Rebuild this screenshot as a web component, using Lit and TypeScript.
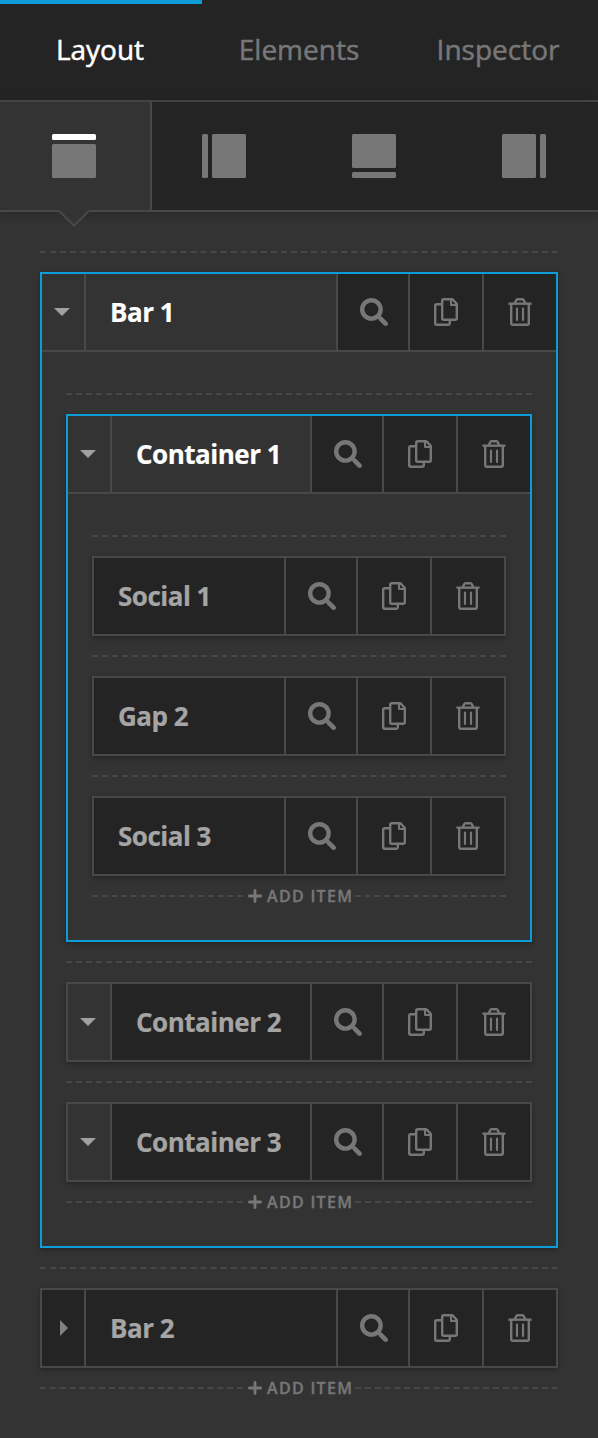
import { LitElement, html, svg, css, nothing } from "lit";
import { customElement, property } from "lit/decorators.js";

interface TreeItem {
  label: string;
  toggle?: "open" | "closed";
  active?: boolean;
  children?: TreeItem[];
}

const TREE: TreeItem[] = [
  {
    label: "Bar 1",
    toggle: "open",
    active: true,
    children: [
      {
        label: "Container 1",
        toggle: "open",
        active: true,
        children: [{ label: "Social 1" }, { label: "Gap 2" }, { label: "Social 3" }],
      },
      { label: "Container 2", toggle: "open" },
      { label: "Container 3", toggle: "open" },
    ],
  },
  { label: "Bar 2", toggle: "closed" },
];

const searchIcon = html`<svg width="28" height="28" viewBox="0 0 28 28" fill="none" stroke="currentColor">
  <circle cx="11.4" cy="11.4" r="9.2" stroke-width="4.4" />
  <path d="M18 18l3 3" stroke-width="3.2" />
  <path d="M20.8 20.8l4.800 4.800" stroke-width="4.600" stroke-linecap="round" />
</svg>`;

const copyIcon = html`<svg width="24" height="28" viewBox="0 0 24 28" fill="none" stroke="currentColor" stroke-width="2.400" stroke-linejoin="round">
  <path d="M7.500 6.200H2.700A1.500 1.500 0 0 0 1.200 7.700V25.300A1.500 1.500 0 0 0 2.700 26.800H14.300A1.500 1.500 0 0 0 15.800 25.300V22" />
  <path d="M9.700 1.200H18.200L22.800 5.800V20.300A1.500 1.500 0 0 1 21.300 21.800H9.700A1.500 1.500 0 0 1 8.200 20.300V2.700A1.500 1.500 0 0 1 9.700 1.200Z" />
  <path d="M17 1.500V7H22.500" stroke-width="2" />
</svg>`;

const trashIcon = html`<svg width="24" height="28" viewBox="0 0 24 28" fill="none" stroke="currentColor" stroke-width="2.400" stroke-linejoin="round">
  <path d="M0.500 5.700H23.500" />
  <path d="M6.600 5.500L8.300 2A1.500 1.500 0 0 1 9.700 1.200H14.300A1.500 1.500 0 0 1 15.700 2L17.400 5.500" />
  <path d="M3.200 6V25.300A1.500 1.500 0 0 0 4.700 26.800H19.300A1.500 1.500 0 0 0 20.800 25.300V6" />
  <path d="M9 10.500V22M15 10.500V22" stroke-width="2.200" stroke-linecap="round" />
</svg>`;

const plusIcon = html`<svg width="14" height="14" viewBox="0 0 14 14" fill="none" stroke="currentColor" stroke-width="2.800" stroke-linecap="round">
  <path d="M7 1.400V12.600M1.400 7H12.600" />
</svg>`;

const caret = (dir: "open" | "closed") =>
  dir === "open"
    ? html`<svg width="16" height="8" viewBox="0 0 16 8"><path d="M0 0H16L8 8Z" fill="currentColor" /></svg>`
    : html`<svg class="side" width="8" height="16" viewBox="0 0 8 16"><path d="M0 0V16L8 8Z" fill="currentColor" /></svg>`;

/* Region pictograms: [x, y, width, height] of the bar, then of the page body. */
const REGIONS = [
  { name: "top", bar: [0, 0, 44, 6], body: [0, 10, 44, 34] },
  { name: "left", bar: [0, 0, 6, 44], body: [10, 0, 34, 44] },
  { name: "bottom", bar: [0, 38, 44, 6], body: [0, 0, 44, 34] },
  { name: "right", bar: [38, 0, 6, 44], body: [0, 0, 34, 44] },
];

const block = ([x, y, w, h]: number[], cls: string) =>
  svg`<rect class=${cls} x=${x} y=${y} width=${w} height=${h} rx="1.500" />`;

@customElement("item-tree")
class ItemTree extends LitElement {
  @property({ attribute: false }) items: TreeItem[] = [];

  static styles = css`
    :host {
      display: block;
    }
    .drop {
      display: flex;
      align-items: center;
      height: 40px;
      color: #777;
    }
    .dash {
      flex: 1;
      border-top: 2px dashed #484848;
    }
    .add {
      display: flex;
      align-items: center;
      gap: 5px;
      width: 112px;
      box-sizing: border-box;
      padding-left: 5px;
      font-size: 16px;
      font-weight: 600;
      line-height: 20px;
      letter-spacing: 1.300px;
      white-space: nowrap;
      -webkit-text-stroke: 0.350px currentColor;
    }
    .add svg {
      flex: none;
    }
    .box {
      border: 2px solid #484848;
      background: #333;
      box-shadow: 0 2px 5px rgba(0, 0, 0, 0.28);
    }
    .box.active {
      border-color: #0e9cd9;
    }
    .row {
      display: flex;
      height: 76px;
    }
    .active > .row {
      border-bottom: 2px solid #484848;
    }
    .toggle {
      display: flex;
      align-items: center;
      justify-content: center;
      width: 40px;
      padding-right: 2px;
      border-right: 2px solid #484848;
      color: #a0a0a0;
    }
    .closed {
      background: #242424;
      color: #808080;
    }
    .side {
      padding-left: 4px;
    }
    .label {
      flex: 1;
      padding-left: 24px;
      background: #242424;
      color: #a5a5a5;
      font-size: 26px;
      font-weight: 700;
      line-height: 76px;
      letter-spacing: -0.500px;
      white-space: nowrap;
      -webkit-text-stroke: 0.200px currentColor;
    }
    .active > .row > .label {
      background: #333;
      color: #fff;
    }
    .action {
      display: flex;
      align-items: center;
      justify-content: center;
      width: 72px;
      border-left: 2px solid #484848;
      background: #242424;
      color: #777;
    }
    .search {
      width: 68px;
      padding-left: 2px;
    }
    .children {
      padding: 22px 24px 24px;
    }
  `;

  private renderItem(item: TreeItem): unknown {
    return html`
      <div class="drop"><div class="dash"></div></div>
      <div class="box ${item.active ? "active" : ""}">
        <div class="row">
          ${item.toggle ? html`<div class="toggle ${item.toggle}">${caret(item.toggle)}</div>` : nothing}
          <div class="label">${item.label}</div>
          <div class="action search">${searchIcon}</div>
          <div class="action">${copyIcon}</div>
          <div class="action">${trashIcon}</div>
        </div>
        ${item.children
          ? html`<div class="children"><item-tree .items=${item.children}></item-tree></div>`
          : nothing}
      </div>
    `;
  }

  render() {
    return html`
      ${this.items.map((item) => this.renderItem(item))}
      <div class="drop">
        <div class="dash"></div>
        <div class="add">${plusIcon}<span>ADD ITEM</span></div>
        <div class="dash"></div>
      </div>
    `;
  }
}

@customElement("app-root")
class AppRoot extends LitElement {
  static styles = css`
    :host {
      display: block;
      min-height: 1438px;
      background: #333;
      font-family: "Open Sans", "Noto Sans", sans-serif;
    }
    .tabs {
      display: grid;
      grid-template-columns: 202px 1fr 200px;
      height: 100px;
      background: #242424;
      border-bottom: 2px solid #484848;
    }
    .tab {
      box-sizing: border-box;
      height: 100px;
      padding-right: 2px;
      border-top: 4px solid transparent;
      color: #777;
      font-size: 28px;
      line-height: 90px;
      text-align: center;
      -webkit-text-stroke: 0.500px currentColor;
    }
    .tab:last-child {
      padding-right: 0;
    }
    .tab.current {
      border-color: #0e9cd9;
      color: #fff;
    }
    .regions {
      display: grid;
      grid-template-columns: 152px 150px 150px 1fr;
      height: 108px;
      background: #242424;
      border-bottom: 2px solid #484848;
      box-shadow: 0 2px 10px rgba(0, 0, 0, 0.25);
    }
    .region {
      position: relative;
      display: flex;
      align-items: center;
      padding-left: 50px;
    }
    .region.current {
      padding-left: 52px;
      background: #333;
      border-right: 2px solid #484848;
      box-sizing: border-box;
    }
    .block {
      fill: #777;
    }
    .lit {
      fill: #fff;
    }
    .pointer {
      position: absolute;
      left: 58px;
      top: 108px;
    }
    .content {
      padding: 20px 40px 0;
    }
  `;

  render() {
    return html`
      <div class="tabs">
        <div class="tab current">Layout</div>
        <div class="tab">Elements</div>
        <div class="tab">Inspector</div>
      </div>
      <div class="regions">
        ${REGIONS.map(
          (r, i) => html`<div class="region ${i === 0 ? "current" : ""}">
            <svg width="44" height="44" viewBox="0 0 44 44">
              ${block(r.bar, i === 0 ? "lit" : "block")} ${block(r.body, "block")}
            </svg>
            ${i === 0
              ? html`<svg class="pointer" width="32" height="18" viewBox="0 0 32 18">
                  <path d="M0.600 0L16 15.400L31.400 0Z" fill="#333" />
                  <path d="M1 1L16 15.500L31 1" fill="none" stroke="#484848" stroke-width="2" />
                </svg>`
              : nothing}
          </div>`
        )}
      </div>
      <div class="content"><item-tree .items=${TREE}></item-tree></div>
    `;
  }
}
